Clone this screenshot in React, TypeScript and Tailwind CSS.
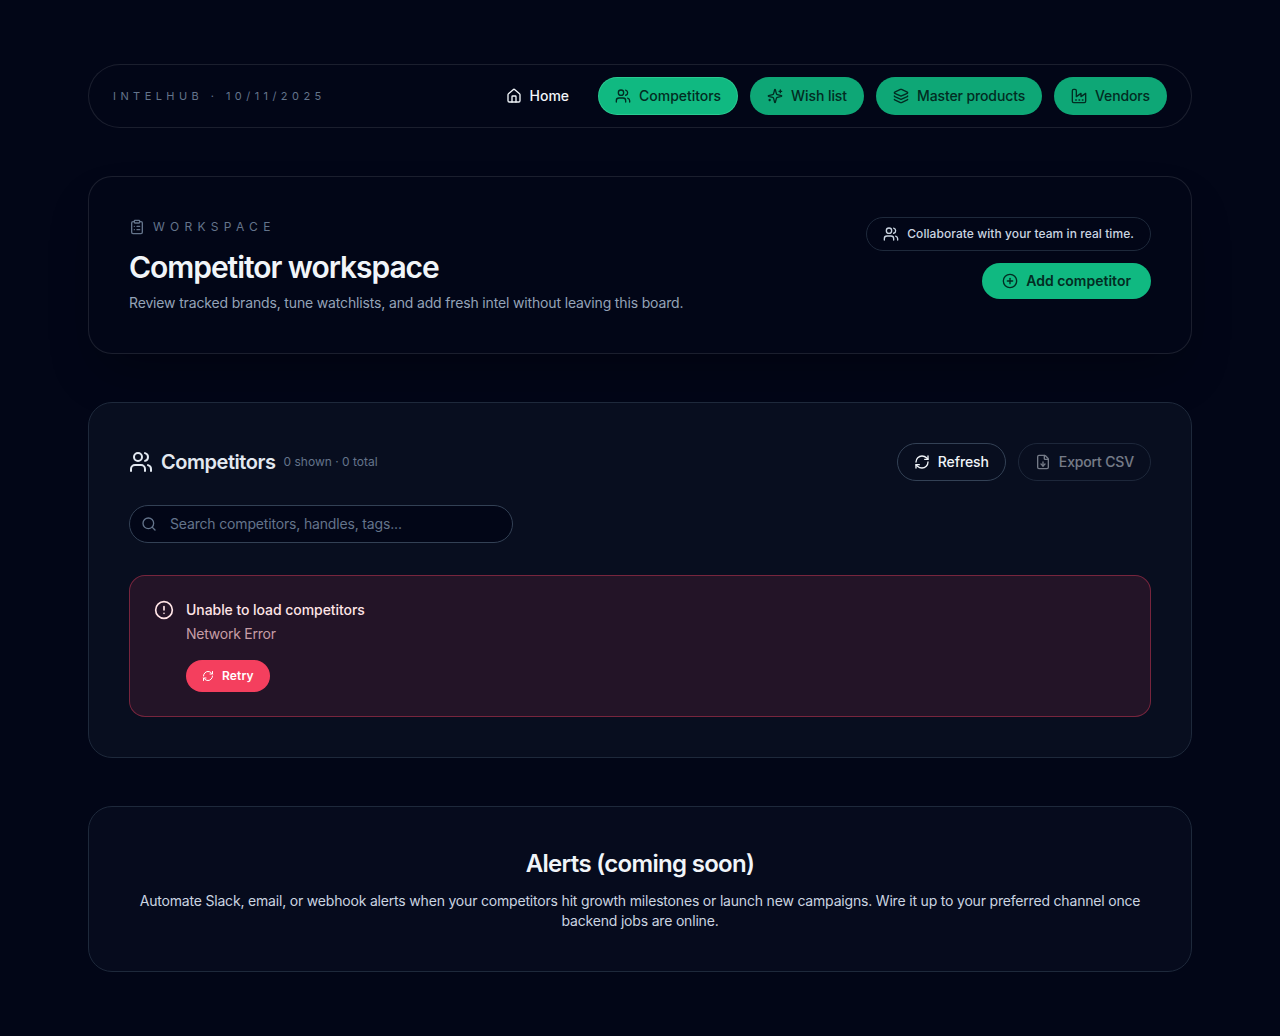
import type { ReactNode } from "react";
import {
  CircleAlert,
  CirclePlus,
  ClipboardList,
  FileDown,
  House,
  Layers,
  RefreshCw,
  Search,
  Users,
} from "lucide-react";

function Glyph({ children }: { children: ReactNode }) {
  return (
    <svg
      width="16"
      height="16"
      viewBox="0 0 24 24"
      fill="none"
      stroke="currentColor"
      strokeWidth="2"
      strokeLinecap="round"
      strokeLinejoin="round"
    >
      {children}
    </svg>
  );
}

function SparklesIcon() {
  return (
    <Glyph>
      <path d="M9.937 15.5A2 2 0 0 0 8.5 14.063l-6.135-1.582a.5.5 0 0 1 0-.962L8.5 9.936A2 2 0 0 0 9.937 8.5l1.582-6.135a.5.5 0 0 1 .963 0L14.063 8.5A2 2 0 0 0 15.5 9.937l6.135 1.581a.5.5 0 0 1 0 .964L15.5 14.063a2 2 0 0 0-1.437 1.437l-1.582 6.135a.5.5 0 0 1-.963 0z" />
      <path d="M20 3v4M22 5h-4M4 17v2M5 18H3" />
    </Glyph>
  );
}

function FactoryIcon() {
  return (
    <Glyph>
      <path d="M2 20a2 2 0 0 0 2 2h16a2 2 0 0 0 2-2V8l-7 5V8l-7 5V4a2 2 0 0 0-2-2H4a2 2 0 0 0-2 2Z" />
      <path d="M17 18h1M12 18h1M7 18h1" />
    </Glyph>
  );
}

const navItems = [
  { label: "Home", icon: <House size={16} />, style: "border-transparent text-[#f1f5f9]" },
  {
    label: "Competitors",
    icon: <Users size={16} />,
    style: "border-[#34d399]/70 bg-[#10b981] text-[#022c22] tracking-[-0.04px]",
  },
  {
    label: "Wish list",
    icon: <SparklesIcon />,
    style: "border-transparent bg-[#10b981]/90 text-[#022c22] tracking-[-0.07px]",
  },
  {
    label: "Master products",
    icon: <Layers size={16} />,
    style: "border-transparent bg-[#10b981]/90 text-[#022c22] tracking-[-0.12px]",
  },
  {
    label: "Vendors",
    icon: <FactoryIcon />,
    style: "border-transparent bg-[#10b981]/90 text-[#022c22] tracking-[-0.14px]",
  },
];

export default function App() {
  return (
    <div className="min-h-screen bg-[#020617] font-['Inter',sans-serif] text-[#f1f5f9]">
      <main className="mx-auto flex max-w-6xl flex-col gap-12 px-6 py-16">
        <header className="flex h-16 items-center justify-between rounded-full border border-white/10 bg-[#020617] px-6">
          <span className="text-[11px] uppercase leading-5 tracking-[4.44px] text-[#64748b]">
            IntelHub · 10/11/2025
          </span>
          <nav className="flex items-center gap-3">
            {navItems.map(({ label, icon, style }) => (
              <a
                key={label}
                className={`flex items-center gap-2 rounded-full border px-4 py-2 text-sm font-medium ${style}`}
              >
                {icon}
                {label}
              </a>
            ))}
          </nav>
        </header>

        <section className="flex h-[178px] items-start justify-between rounded-3xl border border-white/10 bg-[#020617] p-10 shadow-2xl shadow-black/30">
          <div>
            <div className="flex h-5 items-center gap-2 text-xs uppercase tracking-[5.3px] text-[#64748b]">
              <ClipboardList size={16} />
              Workspace
            </div>
            <h1 className="mt-3 text-3xl font-semibold leading-9 tracking-[-1.05px]">
              Competitor workspace
            </h1>
            <p className="mt-2 text-sm tracking-[-0.155px] text-[#94a3b8]">
              Review tracked brands, tune watchlists, and add fresh intel without leaving this board.
            </p>
          </div>
          <div className="flex flex-col items-end gap-3">
            <div className="flex items-center gap-2 rounded-full border border-[#1e293b] px-4 py-2 text-xs font-medium tracking-[0.07px] text-[#cbd5e1]">
              <Users size={16} />
              Collaborate with your team in real time.
            </div>
            <button className="flex items-center gap-2 rounded-full bg-[#10b981] px-5 py-2 text-sm font-semibold text-[#022c22]">
              <CirclePlus size={16} />
              Add competitor
            </button>
          </div>
        </section>

        <section className="rounded-3xl border border-[#1e293b] bg-[#080e1f] p-10">
          <div className="flex items-center justify-between">
            <div className="flex items-center gap-2 text-[#e2e8f0]">
              <Users size={24} />
              <h2 className="text-xl font-semibold tracking-[-0.45px]">Competitors</h2>
              <span className="text-xs text-[#64748b]">0 shown · 0 total</span>
            </div>
            <div className="flex gap-3">
              <button className="flex items-center gap-2 rounded-full border border-[#334155] px-4 py-2 text-sm font-medium tracking-[-0.1px] text-[#f1f5f9]">
                <RefreshCw size={16} />
                Refresh
              </button>
              <button className="flex items-center gap-2 rounded-full border border-[#334155] px-4 py-2 text-sm font-medium tracking-[-0.16px] text-[#e2e8f0] opacity-50">
                <FileDown size={16} />
                Export CSV
              </button>
            </div>
          </div>

          <div className="mt-6 flex h-[38px] w-96 items-center gap-[13px] rounded-full border border-[#334155] bg-[#020617] px-[11px] text-sm tracking-[-0.165px] text-[#64748b]">
            <Search size={16} />
            Search competitors, handles, tags...
          </div>

          <div className="mt-8 flex items-start gap-3 rounded-2xl border border-[#f43f5e]/40 bg-[#231427] p-6 text-sm text-[#ffe4e6]">
            <CircleAlert size={20} />
            <div>
              <p className="font-medium tracking-[-0.06px]">Unable to load competitors</p>
              <p className="mt-1 tracking-[-0.24px] text-[#fecdd3]/75">Network Error</p>
              <button className="mt-4 flex items-center gap-2 rounded-full bg-[#f43f5e] px-4 py-2 text-xs font-semibold tracking-[0.15px] text-white">
                <RefreshCw size={12} />
                Retry
              </button>
            </div>
          </div>
        </section>

        <section className="rounded-3xl border border-[#1e293b] bg-[#060b1d] p-10 text-center">
          <h2 className="pt-px text-2xl font-semibold leading-8 tracking-[-0.7px]">
            Alerts (coming soon)
          </h2>
          <p className="mt-[11px] text-sm tracking-[-0.187px] text-[#cbd5e1]">
            Automate Slack, email, or webhook alerts when your competitors hit growth milestones or
            launch new campaigns. Wire it up to your preferred channel once backend jobs are online.
          </p>
        </section>
      </main>
    </div>
  );
}
